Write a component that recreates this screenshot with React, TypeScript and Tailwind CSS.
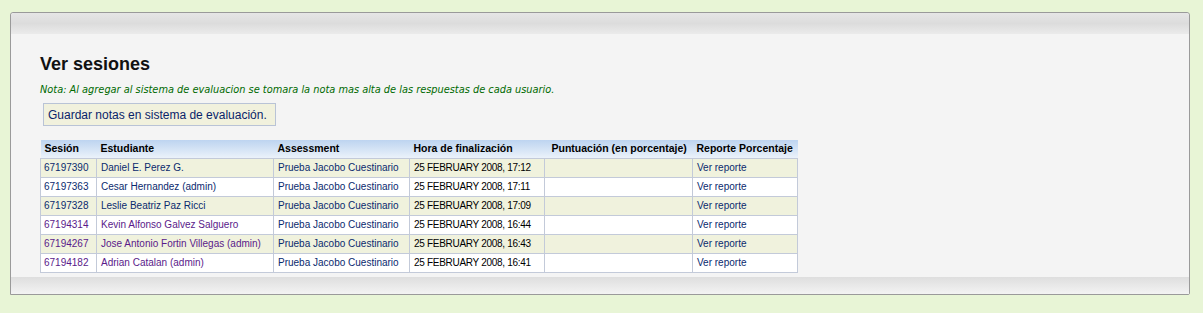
import React from 'react';

type Row = {
  session: string;
  student: string;
  visited: boolean;
  finished: string;
};

const rows: Row[] = [
  { session: '67197390', student: 'Daniel E. Perez G.', visited: false, finished: '25 FEBRUARY 2008, 17:12' },
  { session: '67197363', student: 'Cesar Hernandez (admin)', visited: false, finished: '25 FEBRUARY 2008, 17:11' },
  { session: '67197328', student: 'Leslie Beatriz Paz Ricci', visited: false, finished: '25 FEBRUARY 2008, 17:09' },
  { session: '67194314', student: 'Kevin Alfonso Galvez Salguero', visited: true, finished: '25 FEBRUARY 2008, 16:44' },
  { session: '67194267', student: 'Jose Antonio Fortin Villegas (admin)', visited: true, finished: '25 FEBRUARY 2008, 16:43' },
  { session: '67194182', student: 'Adrian Catalan (admin)', visited: true, finished: '25 FEBRUARY 2008, 16:41' },
];

const font = { fontFamily: '"Liberation Sans", Arial, sans-serif' };

const App = () => {
  return (
    <div className="min-h-[313px] w-[1203px] bg-[#e8f5d6] pt-[12px] pl-[10px]" style={font}>
      {/* Panel */}
      <div className="w-[1180px] rounded-t-[3px] rounded-br-[2px] border border-[#9a9a9a] bg-[#f4f4f4]">
        {/* Top band */}
        <div className="h-[21px] rounded-t-[3px] bg-gradient-to-b from-[#e6e6e6] via-[#dcdcdc] to-[#ebebeb]" />

        <div className="pl-[29px] pt-[19px] pb-[4px]">
          <h2 className="text-[18px] leading-[22px] font-bold text-[#111]">Ver sesiones</h2>

          <p
            className="mt-[9px] text-[9.8px] leading-[12px] italic text-[#006a00]"
            style={{ fontFamily: '"DejaVu Sans", Verdana, sans-serif' }}
          >
            Nota: Al agregar al sistema de evaluacion se tomara la nota mas alta de las respuestas de cada usuario.
          </p>

          <button className="mt-[7px] ml-[3px] flex h-[23px] w-[233px] items-center whitespace-nowrap border border-[#b9c3d6] bg-[#f1f1dd] pl-[4px] text-[12px] text-[#0a246a]">
            Guardar notas en sistema de evaluación.
          </button>

          {/* Sessions table */}
          <table className="mt-[14px] w-[757px] table-fixed border-collapse text-[10px]">
            <colgroup>
              <col className="w-[56px]" />
              <col className="w-[177px]" />
              <col className="w-[136px]" />
              <col className="w-[135px]" />
              <col className="w-[148px]" />
              <col className="w-[105px]" />
            </colgroup>
            <thead>
              <tr className="h-[18px] bg-gradient-to-b from-[#bdd4f0] to-[#ebf2fa] text-left text-[10.5px] font-bold text-black">
                <th className="pl-[4px] font-bold">Sesión</th>
                <th className="pl-[4px] font-bold">Estudiante</th>
                <th className="pl-[4px] font-bold">Assessment</th>
                <th className="pl-[4px] font-bold">Hora de finalización</th>
                <th className="pl-[7px] font-bold whitespace-nowrap">Puntuación (en porcentaje)</th>
                <th className="pl-[4px] font-bold whitespace-nowrap">Reporte Porcentaje</th>
              </tr>
            </thead>
            <tbody>
              {rows.map((r, i) => {
                const link = r.visited ? 'text-[#5a1a8a]' : 'text-[#0a2a6e]';
                return (
                  <tr key={r.session} className={`h-[19px] ${i % 2 === 0 ? 'bg-[#f0f2dd]' : 'bg-white'}`}>
                    <td className={`border border-[#c3cad9] pl-[3px] ${link}`}>{r.session}</td>
                    <td className={`border border-[#c3cad9] pl-[4px] whitespace-nowrap ${link}`}>{r.student}</td>
                    <td className="border border-[#c3cad9] pl-[4px] whitespace-nowrap text-[#0a2a6e]">Prueba Jacobo Cuestinario</td>
                    <td className="border border-[#c3cad9] pl-[4px] whitespace-nowrap tracking-[-0.3px] text-black">{r.finished}</td>
                    <td className="border border-[#c3cad9]" />
                    <td className="border border-[#c3cad9] pl-[4px] text-[#0a2a6e]">Ver reporte</td>
                  </tr>
                );
              })}
            </tbody>
          </table>
        </div>

        {/* Bottom band */}
        <div className="h-[17px] bg-gradient-to-b from-[#dedede] to-[#f3f3f3]" />
      </div>
    </div>
  );
};

export default App;
